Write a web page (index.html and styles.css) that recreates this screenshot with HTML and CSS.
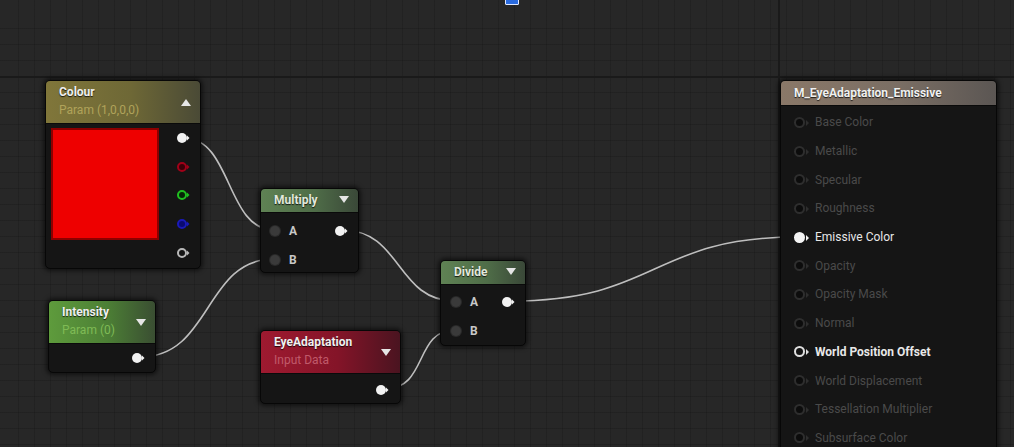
FILE: index.html
```html
<!DOCTYPE html>
<html>
<head>
<meta charset="utf-8">
<link rel="stylesheet" href="styles.css">
</head>
<body>
<div class="canvas">
  <div class="major-h"></div>
  <div class="major-v"></div>
  <div class="marker"></div>

  <svg class="wires" width="1014" height="447" viewBox="0 0 1014 447">
    <path d="M184,138 C232,138 226,230 274,230"/>
    <path d="M140,357 C212,357 204,259 274,259"/>
    <path d="M342,230 C402,230 396,301 455,301"/>
    <path d="M385,389 C428,389 414,330 455,330"/>
    <path d="M510,301 C660,301 650,237 798,237"/>
  </svg>

  <!-- Colour param node -->
  <div class="node colour">
    <div class="head head-yellow tall">
      <div class="titles">
        <div class="title">Colour</div>
        <div class="sub sub-yellow">Param (1,0,0,0)</div>
      </div>
      <span class="tri up"></span>
    </div>
    <div class="body colour-body">
      <div class="swatch"></div>
      <div class="pincol">
        <div class="prow"><svg class="pin" viewBox="0 0 14 12"><circle cx="6" cy="6" r="5" fill="#f2f2f2"/><path d="M11,3.5 L13.5,6 L11,8.5Z" fill="#f2f2f2"/></svg></div>
        <div class="prow"><svg class="pin" viewBox="0 0 14 12"><circle cx="6" cy="6" r="4" fill="#3a0008" stroke="#a00018" stroke-width="2"/><path d="M11,3.5 L13.5,6 L11,8.5Z" fill="#a00018"/></svg></div>
        <div class="prow"><svg class="pin" viewBox="0 0 14 12"><circle cx="6" cy="6" r="4" fill="#062406" stroke="#20c020" stroke-width="2"/><path d="M11,3.5 L13.5,6 L11,8.5Z" fill="#20c020"/></svg></div>
        <div class="prow"><svg class="pin" viewBox="0 0 14 12"><circle cx="6" cy="6" r="4" fill="#0a0a70" stroke="#1a1ab8" stroke-width="2"/><path d="M11,3.5 L13.5,6 L11,8.5Z" fill="#1a1ab8"/></svg></div>
        <div class="prow"><svg class="pin" viewBox="0 0 14 12"><circle cx="6" cy="6" r="4" fill="#141414" stroke="#b8b8b8" stroke-width="2"/><path d="M11,3.5 L13.5,6 L11,8.5Z" fill="#b8b8b8"/></svg></div>
      </div>
    </div>
  </div>

  <!-- Intensity param node -->
  <div class="node intensity">
    <div class="head head-green tall">
      <div class="titles">
        <div class="title">Intensity</div>
        <div class="sub sub-green">Param (0)</div>
      </div>
      <span class="tri down"></span>
    </div>
    <div class="body out-body int-body">
      <svg class="pin" viewBox="0 0 14 12"><circle cx="6" cy="6" r="5" fill="#f2f2f2"/><path d="M11,3.5 L13.5,6 L11,8.5Z" fill="#f2f2f2"/></svg>
    </div>
  </div>

  <!-- Multiply node -->
  <div class="node multiply">
    <div class="head head-op">
      <div class="title">Multiply</div>
      <span class="tri down"></span>
    </div>
    <div class="body op-body">
      <div class="oprow">
        <span class="in-dot"></span><span class="plabel">A</span>
        <svg class="pin out" viewBox="0 0 14 12"><circle cx="6" cy="6" r="5" fill="#f2f2f2"/><path d="M11,3.5 L13.5,6 L11,8.5Z" fill="#f2f2f2"/></svg>
      </div>
      <div class="oprow">
        <span class="in-dot"></span><span class="plabel">B</span>
      </div>
    </div>
  </div>

  <!-- EyeAdaptation node -->
  <div class="node eye">
    <div class="head head-red tall">
      <div class="titles">
        <div class="title">EyeAdaptation</div>
        <div class="sub sub-red">Input Data</div>
      </div>
      <span class="tri down"></span>
    </div>
    <div class="body out-body eye-body">
      <svg class="pin" viewBox="0 0 14 12"><circle cx="6" cy="6" r="5" fill="#f2f2f2"/><path d="M11,3.5 L13.5,6 L11,8.5Z" fill="#f2f2f2"/></svg>
    </div>
  </div>

  <!-- Divide node -->
  <div class="node divide">
    <div class="head head-op">
      <div class="title">Divide</div>
      <span class="tri down"></span>
    </div>
    <div class="body op-body">
      <div class="oprow">
        <span class="in-dot"></span><span class="plabel">A</span>
        <svg class="pin out" viewBox="0 0 14 12"><circle cx="6" cy="6" r="5" fill="#f2f2f2"/><path d="M11,3.5 L13.5,6 L11,8.5Z" fill="#f2f2f2"/></svg>
      </div>
      <div class="oprow">
        <span class="in-dot"></span><span class="plabel">B</span>
      </div>
    </div>
  </div>

  <!-- Material result node -->
  <div class="node result">
    <div class="head head-result">
      <div class="title">M_EyeAdaptation_Emissive</div>
    </div>
    <div class="body result-body">
      <div class="rrow"><span class="rpin"></span><span class="rlabel">Base Color</span></div>
      <div class="rrow"><span class="rpin"></span><span class="rlabel">Metallic</span></div>
      <div class="rrow"><span class="rpin"></span><span class="rlabel">Specular</span></div>
      <div class="rrow"><span class="rpin"></span><span class="rlabel">Roughness</span></div>
      <div class="rrow on"><span class="rpin filled"></span><span class="rlabel">Emissive Color</span></div>
      <div class="rrow"><span class="rpin"></span><span class="rlabel">Opacity</span></div>
      <div class="rrow"><span class="rpin"></span><span class="rlabel">Opacity Mask</span></div>
      <div class="rrow"><span class="rpin"></span><span class="rlabel">Normal</span></div>
      <div class="rrow on"><span class="rpin ring"></span><span class="rlabel">World Position Offset</span></div>
      <div class="rrow"><span class="rpin"></span><span class="rlabel">World Displacement</span></div>
      <div class="rrow"><span class="rpin"></span><span class="rlabel">Tessellation Multiplier</span></div>
      <div class="rrow"><span class="rpin"></span><span class="rlabel">Subsurface Color</span></div>
    </div>
  </div>
</div>
</body>
</html>
```

FILE: styles.css
```css
* { box-sizing: border-box; }

html, body {
  margin: 0;
  padding: 0;
  width: 1014px;
  height: 447px;
  overflow: hidden;
  background: #252525;
  font-family: Roboto, "Liberation Sans", Arial, sans-serif;
}

.canvas {
  position: relative;
  width: 1014px;
  height: 447px;
  overflow: hidden;
  background-color: #272727;
  background-image:
    repeating-linear-gradient(90deg, transparent 0 15px, rgba(20,20,20,0.28) 15px 16px),
    repeating-linear-gradient(0deg, transparent 0 15px, rgba(20,20,20,0.28) 15px 16px);
  background-position: 3px 13px;
}

.major-h {
  position: absolute;
  left: 0; top: 76px;
  width: 1014px; height: 2px;
  background: #1a1a1a;
}
.major-v {
  position: absolute;
  left: 778px; top: 0;
  width: 2px; height: 447px;
  background: #1a1a1a;
}

.marker {
  position: absolute;
  left: 505px; top: -3px;
  width: 14px; height: 8px;
  background: #2a6be0;
  border: 1px solid #dfe8ff;
  border-radius: 1px;
}

.wires {
  position: absolute;
  left: 0; top: 0;
}
.wires path {
  fill: none;
  stroke: #cfcfcf;
  stroke-width: 1.6;
  opacity: 0.9;
}

/* Nodes */
.node {
  position: absolute;
  background: #151515;
  border: 1px solid #070707;
  border-radius: 5px;
  box-shadow: 0 0 4px 2px rgba(0,0,0,0.55);
  overflow: hidden;
}
.colour    { left: 45px;  top: 80px;  width: 156px; height: 189px; }
.intensity { left: 48px;  top: 300px; width: 108px; height: 73px; }
.multiply  { left: 260px; top: 188px; width: 99px;  height: 85px; }
.eye       { left: 260px; top: 330px; width: 141px; height: 74px; }
.divide    { left: 440px; top: 260px; width: 86px;  height: 86px; }
.result    { left: 780px; top: 80px;  width: 217px; height: 380px; background: #151515; }

.head {
  display: flex;
  align-items: center;
  justify-content: space-between;
  padding: 0 9px 0 13px;
  height: 24px;
  border-bottom: 1px solid #0a0a0a;
}
.head.tall {
  align-items: flex-start;
  height: 43px;
  padding-top: 4px;
}
.head-yellow { background: linear-gradient(90deg, #80763a 0%, #6e6836 55%, #4a4a36 100%); }
.head-green  { background: linear-gradient(90deg, #5e9b3c 0%, #4c7f35 55%, #3a4e32 100%); height: 46px; }
.head-op     { background: linear-gradient(90deg, #5f8254 0%, #4f6d48 55%, #3a4838 100%); }
.head-red    { background: linear-gradient(90deg, #9e1a30 0%, #841428 55%, #4a1420 100%); }
.head-result {
  background: linear-gradient(90deg, #8a7868 0%, #7a6e64 55%, #5b5653 100%);
  height: 25px;
  padding-left: 13px;
}

.titles { display: flex; flex-direction: column; gap: 3px; }
.title {
  color: #f0f0f0;
  font-size: 12px;
  font-weight: bold;
  line-height: 15px;
  text-shadow: 0 1px 1px rgba(0,0,0,0.8);
  white-space: nowrap;
}
.head-op .title { color: #e2e8dc; }
.sub {
  font-size: 12px;
  line-height: 15px;
  white-space: nowrap;
}
.sub-yellow { color: #b0a35a; }
.sub-green  { color: #7fbb55; }
.sub-red    { color: #c05a6a; }

.tri {
  width: 0; height: 0;
  border-left: 5px solid transparent;
  border-right: 5px solid transparent;
}
.tri.up   { border-bottom: 7px solid #e6e6e6; margin-top: 14px; }
.tri.down { border-top: 7px solid #e6e6e6; }
.head.tall .tri.down { margin-top: 14px; }
.head-op .tri.down { margin-top: -2px; }

/* Colour body */
.colour-body {
  display: flex;
  padding: 4px 0 0 5px;
  gap: 17px;
}
.swatch {
  width: 108px;
  height: 112px;
  background: #ee0000;
  border: 2px solid #8c0000;
}
.pincol {
  display: flex;
  flex-direction: column;
  margin-top: -4px;
}
.prow {
  height: 28.6px;
  display: flex;
  align-items: center;
}
.pin { width: 14px; height: 12px; display: block; }

/* output-only bodies */
.out-body {
  display: flex;
  justify-content: flex-end;
}
.int-body { padding: 8px 10px 0 0; }
.eye-body { padding: 10px 11px 0 0; }

/* operator bodies */
.op-body {
  display: flex;
  flex-direction: column;
  padding-top: 3px;
}
.divide .op-body { padding-top: 2px; }
.oprow {
  display: flex;
  align-items: center;
  height: 29px;
  padding-left: 9px;
}
.in-dot {
  width: 10px; height: 10px;
  border-radius: 50%;
  background: #3a3a3a;
  box-shadow: 0 0 0 1px #2a2a2a;
}
.plabel {
  color: #c8c8c8;
  font-size: 12px;
  font-weight: bold;
  margin-left: 9px;
}
.oprow .pin.out { margin-left: auto; margin-right: 10px; }
.divide .oprow .pin.out { margin-right: 10px; }
.divide .oprow { padding-left: 10px; }
.multiply .oprow { padding-left: 9px; }

/* result body */
.result-body {
  display: flex;
  flex-direction: column;
  padding-top: 2px;
}
.rrow {
  display: flex;
  align-items: center;
  height: 28.7px;
  padding-left: 13px;
  gap: 10px;
}
.rpin {
  width: 11px; height: 11px;
  border-radius: 50%;
  border: 2px solid #2e2e2e;
  background: #0c0c0c;
  position: relative;
}
.rpin::after {
  content: "";
  position: absolute;
  right: -6px; top: 1px;
  border-top: 3px solid transparent;
  border-bottom: 3px solid transparent;
  border-left: 3px solid #2e2e2e;
}
.rpin.filled { background: #f4f4f4; border-color: #f4f4f4; }
.rpin.filled::after { border-left-color: #f4f4f4; }
.rpin.ring { border-color: #e0e0e0; background: #141414; }
.rpin.ring::after { border-left-color: #e0e0e0; }
.rlabel {
  color: #4a4a4a;
  font-size: 12px;
  white-space: nowrap;
}
.rrow.on .rlabel { color: #e8e8e8; font-weight: bold; }
.rrow.on:nth-child(5) .rlabel { font-weight: normal; }
```
